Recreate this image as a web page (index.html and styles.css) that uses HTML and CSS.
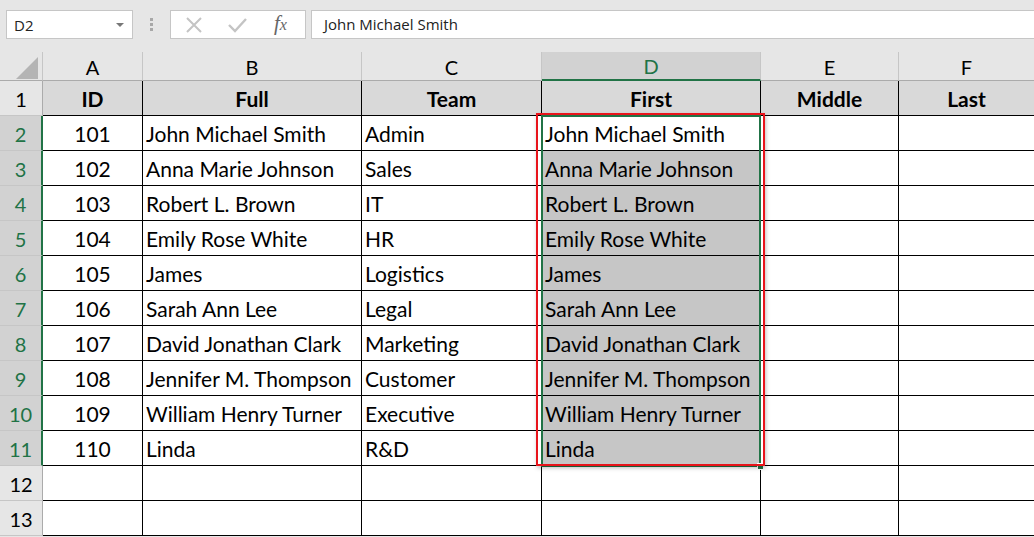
FILE: index.html
```html
<!DOCTYPE html>
<html lang="en">
<head>
    <meta charset="UTF-8">
    <title>Sheet1</title>
    <link rel="stylesheet" href="styles.css">
</head>
<body>
    <div class="topbar">
        <div class="namebox">
            <span>D2</span>
            <span class="caret"></span>
        </div>
        <div class="dots"><i></i><i></i><i></i></div>
        <div class="fbuttons">
            <svg width="20" height="20" viewBox="0 0 20 20"><path d="M3 3 L17 17 M17 3 L3 17" stroke="#c4c4c4" stroke-width="2" fill="none"/></svg>
            <svg width="22" height="20" viewBox="0 0 22 20"><path d="M3 10 L9 16 L20 4" stroke="#c4c4c4" stroke-width="2.4" fill="none"/></svg>
            <span class="fx">f<span class="fxx">x</span></span>
        </div>
        <div class="finput">John Michael Smith</div>
    </div>

    <div class="sheet">
        <div class="grid">
            <div class="corner"><span class="tri"></span></div>
            <div class="colhead">A</div>
            <div class="colhead">B</div>
            <div class="colhead">C</div>
            <div class="colhead sel">D</div>
            <div class="colhead">E</div>
            <div class="colhead">F</div>

            <div class="rowhead">1</div>
            <div class="cell title center">ID</div>
            <div class="cell title center">Full</div>
            <div class="cell title center">Team</div>
            <div class="cell title center">First</div>
            <div class="cell title center">Middle</div>
            <div class="cell title center">Last</div>

            <div class="rowhead sel">2</div>
            <div class="cell center">101</div>
            <div class="cell">John Michael Smith</div>
            <div class="cell">Admin</div>
            <div class="cell name">John Michael Smith</div>
            <div class="cell"></div>
            <div class="cell"></div>

            <div class="rowhead sel">3</div>
            <div class="cell center">102</div>
            <div class="cell">Anna Marie Johnson</div>
            <div class="cell">Sales</div>
            <div class="cell name picked">Anna Marie Johnson</div>
            <div class="cell"></div>
            <div class="cell"></div>

            <div class="rowhead sel">4</div>
            <div class="cell center">103</div>
            <div class="cell">Robert L. Brown</div>
            <div class="cell">IT</div>
            <div class="cell name picked">Robert L. Brown</div>
            <div class="cell"></div>
            <div class="cell"></div>

            <div class="rowhead sel">5</div>
            <div class="cell center">104</div>
            <div class="cell">Emily Rose White</div>
            <div class="cell">HR</div>
            <div class="cell name picked">Emily Rose White</div>
            <div class="cell"></div>
            <div class="cell"></div>

            <div class="rowhead sel">6</div>
            <div class="cell center">105</div>
            <div class="cell">James</div>
            <div class="cell">Logistics</div>
            <div class="cell name picked">James</div>
            <div class="cell"></div>
            <div class="cell"></div>

            <div class="rowhead sel">7</div>
            <div class="cell center">106</div>
            <div class="cell">Sarah Ann Lee</div>
            <div class="cell">Legal</div>
            <div class="cell name picked">Sarah Ann Lee</div>
            <div class="cell"></div>
            <div class="cell"></div>

            <div class="rowhead sel">8</div>
            <div class="cell center">107</div>
            <div class="cell">David Jonathan Clark</div>
            <div class="cell">Marketing</div>
            <div class="cell name picked">David Jonathan Clark</div>
            <div class="cell"></div>
            <div class="cell"></div>

            <div class="rowhead sel">9</div>
            <div class="cell center">108</div>
            <div class="cell">Jennifer M. Thompson</div>
            <div class="cell">Customer</div>
            <div class="cell name picked">Jennifer M. Thompson</div>
            <div class="cell"></div>
            <div class="cell"></div>

            <div class="rowhead sel">10</div>
            <div class="cell center">109</div>
            <div class="cell">William Henry Turner</div>
            <div class="cell">Executive</div>
            <div class="cell name picked">William Henry Turner</div>
            <div class="cell"></div>
            <div class="cell"></div>

            <div class="rowhead sel">11</div>
            <div class="cell center">110</div>
            <div class="cell">Linda</div>
            <div class="cell">R&amp;D</div>
            <div class="cell name picked">Linda</div>
            <div class="cell"></div>
            <div class="cell"></div>

            <div class="rowhead">12</div>
            <div class="cell"></div>
            <div class="cell"></div>
            <div class="cell"></div>
            <div class="cell"></div>
            <div class="cell"></div>
            <div class="cell"></div>

            <div class="rowhead">13</div>
            <div class="cell"></div>
            <div class="cell"></div>
            <div class="cell"></div>
            <div class="cell"></div>
            <div class="cell"></div>
            <div class="cell"></div>
        </div>

        <!-- selection D2:D11 and the red annotation box -->
        <div class="range"><span class="handle"></span></div>
        <div class="mark"></div>
    </div>
</body>
</html>
```

FILE: styles.css
```css
body {
    margin: 0;
    background: #e6e6e6;
    font-family: Lato, "Open Sans", sans-serif;
    color: #000;
    overflow: hidden;
}
.topbar {
    display: flex;
    align-items: center;
    height: 29px;
    padding: 10px 0 13px 6px;
    font-family: "Open Sans", "Noto Sans", sans-serif;
    font-size: 15px;
}
.namebox {
    width: 118px;
    height: 27px;
    background: #fff;
    border: 1px solid #c6c6c6;
    display: flex;
    align-items: center;
    justify-content: space-between;
    padding: 0 0 0 7px;
    box-sizing: content-box;
}
.namebox span:first-child {
    color: #222;
}
.caret {
    width: 0;
    height: 0;
    border-left: 4px solid transparent;
    border-right: 4px solid transparent;
    border-top: 4px solid #777;
    margin-right: 8px;
}
.dots {
    width: 37px;
    display: flex;
    flex-direction: column;
    align-items: center;
    gap: 2px;
}
.dots i {
    width: 3px;
    height: 3px;
    background: #a8a8a8;
}
.fbuttons {
    width: 136px;
    background: #fff;
    border: 1px solid #c6c6c6;
    display: flex;
    align-items: center;
    gap: 22px;
    padding-left: 13px;
    box-sizing: border-box;
    height: 29px;
}
.fx {
    font-family: "Liberation Serif", serif;
    font-style: italic;
    font-size: 21px;
    color: #666;
    margin: -3px 0 0 4px;
}
.fxx {
    font-size: 16px;
}
.finput {
    flex: 1;
    height: 29px;
    margin-left: 5px;
    background: #fff;
    border: 1px solid #c6c6c6;
    border-right: none;
    box-sizing: border-box;
    padding-left: 12px;
    line-height: 27px;
    color: #222;
}

.sheet {
    position: relative;
}
.grid {
    display: grid;
    grid-template-columns: 43px 100px 219px 180px 219px 138px 136px;
    grid-template-rows: 29px repeat(13, 35px);
    font-size: 21px;
}
.corner {
    position: relative;
    border-right: 1px solid #c6c6c6;
    border-bottom: 1px solid #ababab;
}
.tri {
    position: absolute;
    right: 4px;
    bottom: 1px;
    width: 0;
    height: 0;
    border-left: 22px solid transparent;
    border-bottom: 22px solid #b4b4b4;
}
.colhead {
    text-align: center;
    font-size: 20px;
    line-height: 30px;
    border-right: 1px solid #c6c6c6;
    border-bottom: 1px solid #ababab;
}
.colhead.sel {
    background: #d2d2d2;
    color: #217346;
    border-bottom: 2px solid #217346;
    line-height: 29px;
}
.rowhead {
    text-align: center;
    font-size: 20px;
    line-height: 37px;
    border-right: 1px solid #ababab;
    border-bottom: 1px solid #c6c6c6;
}
.rowhead.sel {
    background: #d2d2d2;
    color: #217346;
    border-right: 2px solid #217346;
}
.cell {
    background: #fff;
    border-right: 1px solid #000;
    border-bottom: 1px solid #000;
    padding-left: 3px;
    line-height: 36px;
    white-space: nowrap;
    overflow: hidden;
}
.cell.title {
    background: #d9d9d9;
    font-weight: bold;
}
.center {
    text-align: center;
    padding-left: 0;
}
.name {
    padding-left: 3px;
}
.picked {
    background: #c6c6c6;
}
.range {
    position: absolute;
    left: 541px;
    top: 63px;
    width: 216px;
    height: 348px;
    border: 2px solid #217346;
    pointer-events: none;
}
.handle {
    position: absolute;
    right: -5px;
    bottom: -5px;
    width: 5px;
    height: 5px;
    background: #217346;
    border: 1px solid #fff;
}
.mark {
    position: absolute;
    left: 536px;
    top: 61px;
    width: 225px;
    height: 349px;
    border: 2px solid #e8141b;
    box-shadow: 1px 2px 4px rgba(0, 0, 0, 0.25);
    pointer-events: none;
}
```
